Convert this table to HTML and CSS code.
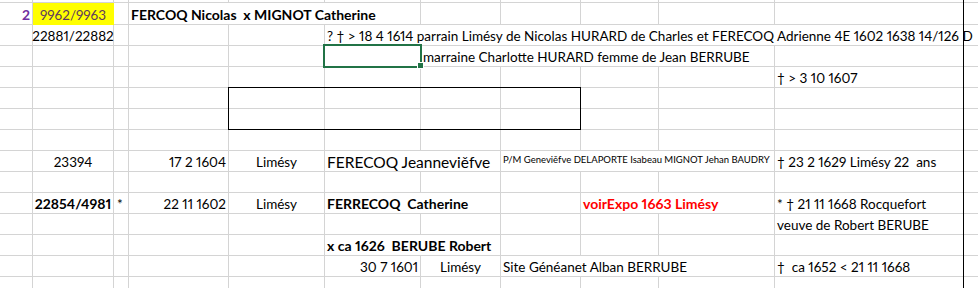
FILE: index.html
```html
<!DOCTYPE html>
<html lang="fr">
<head>
<meta charset="utf-8">
<title>Feuille</title>
<link rel="stylesheet" href="styles.css">
</head>
<body>
<div class="sheet">
  <!-- top strip -->
  <div class="c"></div><div class="c"></div><div class="c"></div><div class="c"></div><div class="c"></div><div class="c"></div><div class="c"></div><div class="c"></div><div class="c"></div><div class="c"></div><div class="c"></div><div class="c last"></div>

  <!-- row A -->
  <div class="c r num">2</div>
  <div class="c m yellow">9962/9963</div>
  <div class="c"></div>
  <div class="c s3 b">FERCOQ Nicolas  x MIGNOT Catherine</div>
  <div class="c"></div><div class="c"></div><div class="c"></div><div class="c"></div><div class="c"></div><div class="c last"></div>

  <!-- row B -->
  <div class="c"></div>
  <div class="c m">22881/22882</div>
  <div class="c"></div><div class="c"></div><div class="c"></div>
  <div class="c s6">? † &gt; 18 4 1614 parrain Limésy de Nicolas HURARD de Charles et FERECOQ Adrienne 4E 1602 1638 14/126 D</div>
  <div class="c last"></div>

  <!-- row C -->
  <div class="c"></div><div class="c"></div><div class="c"></div><div class="c"></div><div class="c"></div><div class="c"></div>
  <div class="c s4">marraine Charlotte HURARD femme de Jean BERRUBE</div>
  <div class="c"></div><div class="c last"></div>

  <!-- row D -->
  <div class="c"></div><div class="c"></div><div class="c"></div><div class="c"></div><div class="c"></div><div class="c"></div><div class="c"></div><div class="c"></div><div class="c"></div><div class="c"></div>
  <div class="c">† &gt; 3 10 1607</div>
  <div class="c last"></div>

  <!-- row E -->
  <div class="c"></div><div class="c"></div><div class="c"></div><div class="c"></div><div class="c"></div><div class="c"></div><div class="c"></div><div class="c"></div><div class="c"></div><div class="c"></div><div class="c"></div><div class="c last"></div>
  <!-- row F -->
  <div class="c"></div><div class="c"></div><div class="c"></div><div class="c"></div><div class="c"></div><div class="c"></div><div class="c"></div><div class="c"></div><div class="c"></div><div class="c"></div><div class="c"></div><div class="c last"></div>
  <!-- row G -->
  <div class="c"></div><div class="c"></div><div class="c"></div><div class="c"></div><div class="c"></div><div class="c"></div><div class="c"></div><div class="c"></div><div class="c"></div><div class="c"></div><div class="c"></div><div class="c last"></div>

  <!-- row H -->
  <div class="c"></div>
  <div class="c m">23394</div>
  <div class="c"></div>
  <div class="c r">17 2 1604</div>
  <div class="c m">Limésy</div>
  <div class="c s2 big">FERECOQ Jeanneviěfve</div>
  <div class="c s3 small">P/M Geneviěfve DELAPORTE Isabeau MIGNOT Jehan BAUDRY</div>
  <div class="c">† 23 2 1629 Limésy 22  ans</div>
  <div class="c last"></div>

  <!-- row I -->
  <div class="c"></div><div class="c"></div><div class="c"></div><div class="c"></div><div class="c"></div><div class="c"></div><div class="c"></div><div class="c"></div><div class="c"></div><div class="c"></div><div class="c"></div><div class="c last"></div>

  <!-- row J -->
  <div class="c"></div>
  <div class="c m b">22854/4981</div>
  <div class="c star">*</div>
  <div class="c r">22 11 1602</div>
  <div class="c m">Limésy</div>
  <div class="c s2 b">FERRECOQ  Catherine</div>
  <div class="c"></div>
  <div class="c s2 b red">voirExpo 1663 Limésy</div>
  <div class="c">* † 21 11 1668 Rocquefort</div>
  <div class="c last"></div>

  <!-- row K -->
  <div class="c"></div><div class="c"></div><div class="c"></div><div class="c"></div><div class="c"></div><div class="c"></div><div class="c"></div><div class="c"></div><div class="c"></div><div class="c"></div>
  <div class="c">veuve de Robert BERUBE</div>
  <div class="c last"></div>

  <!-- row L -->
  <div class="c"></div><div class="c"></div><div class="c"></div><div class="c"></div><div class="c"></div>
  <div class="c s2 b">x ca 1626  BERUBE Robert</div>
  <div class="c"></div><div class="c"></div><div class="c"></div><div class="c"></div><div class="c last"></div>

  <!-- row M -->
  <div class="c"></div><div class="c"></div><div class="c"></div><div class="c"></div><div class="c"></div>
  <div class="c r">30 7 1601</div>
  <div class="c m">Limésy</div>
  <div class="c s3">Site Généanet Alban BERRUBE</div>
  <div class="c">†  ca 1652 &lt; 21 11 1668</div>
  <div class="c last"></div>

  <!-- row N -->
  <div class="c"></div><div class="c"></div><div class="c"></div><div class="c"></div><div class="c"></div><div class="c"></div><div class="c"></div><div class="c"></div><div class="c"></div><div class="c"></div><div class="c"></div><div class="c last"></div>

  <!-- overlays -->
  <div class="box"></div>
  <div class="sel"></div>
  <div class="edge"></div>
</div>
</body>
</html>
```

FILE: styles.css
```css
html, body {
  margin: 0;
  padding: 0;
  background: #fff;
}

body {
  font-family: Lato, "Open Sans", sans-serif;
  font-size: 13.5px;
  font-variant-numeric: proportional-nums;
  color: #000;
  overflow: hidden;
}

.sheet {
  position: relative;
  display: grid;
  grid-template-columns: 33px 81px 15px 100px 96px 96px 80px 80px 78px 116px 189px 20px;
  grid-template-rows: 3px 22px repeat(13, 21px);
  width: 978px;
  height: 288px;
  overflow: hidden;
}

.c {
  box-sizing: border-box;
  min-width: 0;
  display: flex;
  align-items: flex-end;
  padding: 0 2px 1px 2px;
  border-right: 1px solid #d4d4d4;
  border-bottom: 1px solid #d4d4d4;
  white-space: pre;
  line-height: 16px;
}

.s2 { grid-column: span 2; }
.s3 { grid-column: span 3; }
.s4 { grid-column: span 4; }
.s6 { grid-column: span 6; }

.r { justify-content: flex-end; }
.m { justify-content: center; }

.b {
  font-weight: bold;
  font-size: 14px;
}

.num {
  color: #7030a0;
  font-weight: bold;
  font-size: 14px;
}

.yellow {
  background: #ffff00;
  color: #5e3a5e;
  border-right-color: #ffff00;
  border-bottom-color: #ffff00;
}

.big { font-size: 15.5px; }

.small {
  font-size: 9.5px;
  padding-bottom: 3px;
}

.red { color: #f00; }

.star { padding-left: 3px; }

.box {
  position: absolute;
  grid-column: 5 / 9;
  grid-row: 6 / 8;
  top: -1px;
  left: -1px;
  right: 0;
  bottom: 0;
  border: 1px solid #000;
}

.sel {
  position: absolute;
  grid-column: 6 / 7;
  grid-row: 4 / 5;
  top: -2px;
  left: -2px;
  right: -1px;
  bottom: -1px;
  border: 2px solid #217346;
}

.sel::after {
  content: "";
  position: absolute;
  right: -4px;
  bottom: -3px;
  width: 5px;
  height: 5px;
  background: #217346;
  border: 1px solid #fff;
}

.edge {
  position: absolute;
  grid-column: 11 / 12;
  grid-row: 1 / -1;
  top: 0;
  bottom: 0;
  right: 0;
  width: 1px;
  background: #000;
}
```
